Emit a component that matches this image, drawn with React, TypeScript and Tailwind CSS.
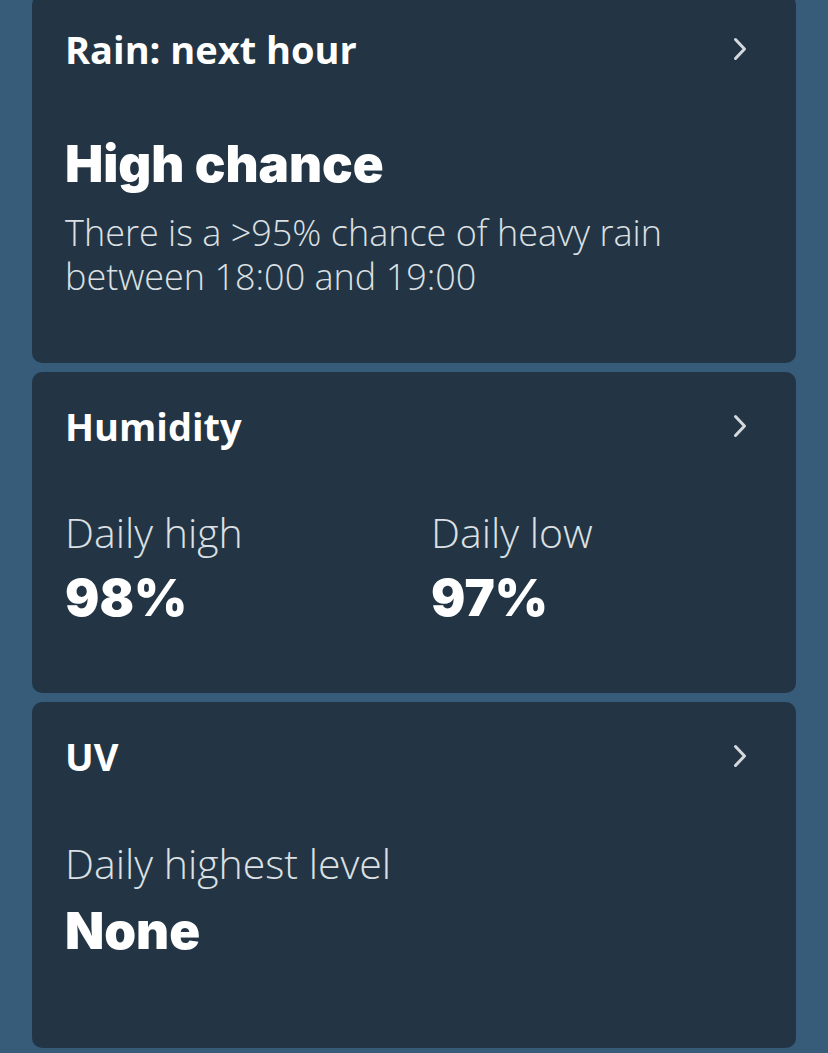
import { ReactNode } from 'react'

function Chevron() {
  return (
    <svg width="14" height="24" viewBox="0 0 14 24" fill="none" className="mr-[16px] shrink-0">
      <path d="M2.5 2.5 L11.5 12 L2.5 21.5" stroke="#d6d9dc" strokeWidth="3" strokeLinecap="round" strokeLinejoin="round" />
    </svg>
  )
}

function Card({ title, children, pb }: { title: string; children: ReactNode; pb: string }) {
  return (
    <div className={`rounded-[10px] bg-[#233544] pl-[33px] pr-[33px] pt-[31px] ${pb}`}>
      <div className="flex items-center justify-between">
        <h2 className="text-[38px] leading-[46px] font-bold text-white">{title}</h2>
        <Chevron />
      </div>
      {children}
    </div>
  )
}

const body = 'text-[36px] leading-[44px] font-light text-[#dde0e3]'
const label = 'text-[41px] leading-[46px] font-light text-[#dde0e3]'
const value = "font-['Inter'] text-[51px] leading-[58px] font-black text-white"

export default function App() {
  return (
    <div className="min-h-screen bg-[#375c7a] font-['Open_Sans',sans-serif]">
      <div className="flex flex-col gap-[9px] px-[32px] -mt-[5px] pb-[8px]">
        <Card title="Rain: next hour" pb="pb-[64px]">
          <div className="mt-[63px]">
            <p className={value}>High chance</p>
            <p className={`${body} mt-[18px]`}>
              There is a &gt;95% chance of heavy rain
              <br />
              between 18:00 and 19:00
            </p>
          </div>
        </Card>

        <Card title="Humidity" pb="pb-[66px]">
          <div className="mt-[60px] flex">
            <div className="w-[366px]">
              <p className={label}>Daily high</p>
              <p className={`${value} mt-[14px]`}>98%</p>
            </div>
            <div>
              <p className={label}>Daily low</p>
              <p className={`${value} mt-[14px]`}>97%</p>
            </div>
          </div>
        </Card>

        <Card title="UV" pb="pb-[88px]">
          <div className="mt-[61px]">
            <p className={label}>Daily highest level</p>
            <p className={`${value} mt-[16px]`}>None</p>
          </div>
        </Card>
      </div>
    </div>
  )
}
